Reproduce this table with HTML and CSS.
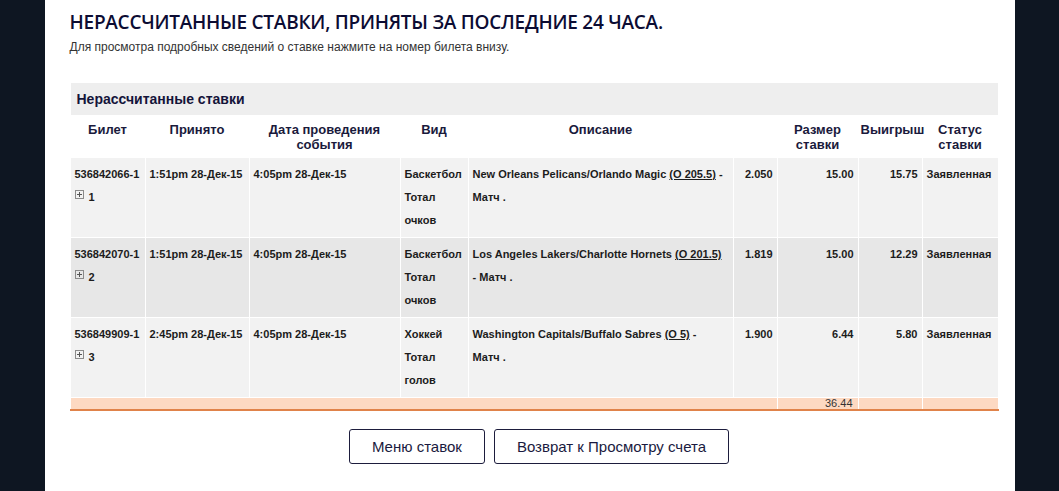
FILE: index.html
```html
<!DOCTYPE html>
<html lang="ru">
<head>
<meta charset="utf-8">
<title>Нерассчитанные ставки</title>
<link rel="stylesheet" href="styles.css">
</head>
<body>
<div class="page">
  <h1 class="title">НЕРАССЧИТАННЫЕ СТАВКИ, ПРИНЯТЫ ЗА ПОСЛЕДНИЕ 24 ЧАСА.</h1>
  <p class="lead">Для просмотра подробных сведений о ставке нажмите на номер билета внизу.</p>
  <table class="bets">
    <colgroup>
      <col class="c-ticket"><col class="c-acc"><col class="c-date"><col class="c-kind"><col class="c-desc"><col class="c-odds"><col class="c-stake"><col class="c-win"><col class="c-status">
    </colgroup>
    <thead>
      <tr><th colspan="9" class="band">Нерассчитанные ставки</th></tr>
      <tr class="heads">
        <th>Билет</th><th>Принято</th><th>Дата проведения<br>события</th><th>Вид</th><th>Описание</th><th></th><th>Размер<br>ставки</th><th>Выигрыш</th><th>Статус<br>ставки</th>
      </tr>
    </thead>
    <tbody>
      <tr class="odd">
        <td>536842066-1<br><span class="exp"><svg class="plus" width="9" height="9" viewBox="0 0 9 9"><rect x="0.5" y="0.5" width="8" height="8" fill="none" stroke="#8a8a8a"/><path d="M2 4.5h5M4.5 2v5" stroke="#555" stroke-width="1"/></svg>1</span></td>
        <td>1:51pm 28-Дек-15</td>
        <td>4:05pm 28-Дек-15</td>
        <td>Баскетбол<br>Тотал<br>очков</td>
        <td>New Orleans Pelicans/Orlando Magic <u>(O 205.5)</u> -<br>Матч .</td>
        <td class="num">2.050</td>
        <td class="num">15.00</td>
        <td class="num">15.75</td>
        <td>Заявленная</td>
      </tr>
      <tr class="even">
        <td>536842070-1<br><span class="exp"><svg class="plus" width="9" height="9" viewBox="0 0 9 9"><rect x="0.5" y="0.5" width="8" height="8" fill="none" stroke="#8a8a8a"/><path d="M2 4.5h5M4.5 2v5" stroke="#555" stroke-width="1"/></svg>2</span></td>
        <td>1:51pm 28-Дек-15</td>
        <td>4:05pm 28-Дек-15</td>
        <td>Баскетбол<br>Тотал<br>очков</td>
        <td>Los Angeles Lakers/Charlotte Hornets <u>(O 201.5)</u><br>- Матч .</td>
        <td class="num">1.819</td>
        <td class="num">15.00</td>
        <td class="num">12.29</td>
        <td>Заявленная</td>
      </tr>
      <tr class="odd">
        <td>536849909-1<br><span class="exp"><svg class="plus" width="9" height="9" viewBox="0 0 9 9"><rect x="0.5" y="0.5" width="8" height="8" fill="none" stroke="#8a8a8a"/><path d="M2 4.5h5M4.5 2v5" stroke="#555" stroke-width="1"/></svg>3</span></td>
        <td>2:45pm 28-Дек-15</td>
        <td>4:05pm 28-Дек-15</td>
        <td>Хоккей<br>Тотал<br>голов</td>
        <td>Washington Capitals/Buffalo Sabres <u>(O 5)</u> -<br>Матч .</td>
        <td class="num">1.900</td>
        <td class="num">6.44</td>
        <td class="num">5.80</td>
        <td>Заявленная</td>
      </tr>
    </tbody>
    <tfoot>
      <tr><td colspan="6"></td><td class="num">36.44</td><td></td><td></td></tr>
    </tfoot>
  </table>
  <div class="actions">
    <button class="btn" type="button">Меню ставок</button>
    <button class="btn" type="button">Возврат к Просмотру счета</button>
  </div>
</div>
</body>
</html>
```

FILE: styles.css
```css
html, body {
  margin: 0;
  padding: 0;
  background: #0e1622;
  height: 100%;
}

.page {
  box-sizing: border-box;
  width: 970px;
  min-height: 100%;
  margin: 0 auto;
  background: #ffffff;
  padding: 10px 16px 0 25px;
  font-family: "Liberation Sans", Arial, sans-serif;
}

.title {
  margin: 0;
  font-family: "Open Sans", "DejaVu Sans", sans-serif;
  font-weight: 600;
  font-size: 19px;
  letter-spacing: -0.25px;
  line-height: 24px;
  color: #0c0c33;
}

.lead {
  margin: 6px 0 0;
  font-size: 12px;
  line-height: 14px;
  color: #333333;
}

.bets {
  margin-top: 28px;
  width: 928px;
  table-layout: fixed;
  border-collapse: collapse;
  color: #1c1c1c;
}

.c-ticket { width: 75px; }
.c-acc { width: 104px; }
.c-date { width: 151px; }
.c-kind { width: 68px; }
.c-desc { width: 265px; }
.c-odds { width: 44px; }
.c-stake { width: 81px; }
.c-win { width: 64px; }
.c-status { width: 76px; }

.bets th,
.bets td {
  border: 1px solid #ffffff;
  white-space: nowrap;
  overflow: visible;
}

.band {
  background: #eeeeee;
  text-align: left;
  font-size: 14px;
  font-weight: 700;
  color: #14143a;
  height: 32px;
  padding: 0 6px;
  line-height: 16px;
}

.heads th {
  font-size: 13px;
  font-weight: 700;
  line-height: 15px;
  color: #1a1a3c;
  text-align: center;
  vertical-align: top;
  padding: 6px 2px 5px;
}

.bets tbody td {
  font-size: 11px;
  font-weight: 700;
  line-height: 23px;
  vertical-align: top;
  padding: 5px 4px 5px 4px;
}

.bets tbody tr.odd td { background: #f2f2f2; }
.bets tbody tr.even td { background: #e7e7e7; }

.bets u {
  text-decoration: underline;
}

.num { text-align: right; }

.exp {
  display: inline-flex;
  align-items: center;
  gap: 5px;
}

.plus {
  display: block;
  position: relative;
  top: -3px;
}

.bets tfoot td {
  background: #fdd9c2;
  border-bottom: 2px solid #e0834a;
  font-size: 11px;
  line-height: 11px;
  color: #333333;
  padding: 0 5px;
  height: 11px;
}

.actions {
  display: flex;
  justify-content: center;
  gap: 9px;
  margin-top: 18px;
  padding-left: 10px;
}

.btn {
  box-sizing: border-box;
  height: 35px;
  padding: 0 22px;
  background: #ffffff;
  border: 1px solid #1d1d3d;
  border-radius: 3px;
  font-family: "Liberation Sans", Arial, sans-serif;
  font-size: 15px;
  color: #1a1a40;
}
```
